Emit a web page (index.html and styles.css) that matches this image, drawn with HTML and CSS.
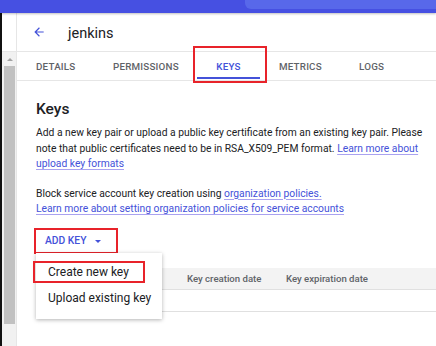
FILE: index.html
```html
<!DOCTYPE html>
<html lang="en">
<head>
    <meta charset="UTF-8">
    <meta name="viewport" content="width=device-width, initial-scale=1.0">
    <title>jenkins - Keys</title>
    <link rel="stylesheet" href="styles.css">
</head>
<body>
    <div class="topbar">
        <div class="search"></div>
    </div>
    <div class="frame">
        <div class="rail">
            <div class="rail-top"></div>
            <div class="scrollbar">
                <div class="sb-arrow"></div>
                <div class="sb-thumb"></div>
            </div>
        </div>
        <div class="page">
            <div class="header">
                <svg class="back" width="14" height="14" viewBox="0 0 24 24">
                    <path d="M20 11H7.83l5.59-5.59L12 4l-8 8 8 8 1.41-1.41L7.83 13H20v-2z" fill="currentColor"/>
                </svg>
                <span class="title">jenkins</span>
            </div>
            <div class="tabs">
                <div class="tab">DETAILS</div>
                <div class="tab">PERMISSIONS</div>
                <div class="tab active marked">KEYS</div>
                <div class="tab">METRICS</div>
                <div class="tab">LOGS</div>
            </div>
            <div class="content">
                <h2>Keys</h2>
                <p class="desc">Add a new key pair or upload a public key certificate from an existing key pair. Please note that public certificates need to be in RSA_X509_PEM format. <a href="#">Learn more about upload key formats</a></p>
                <p class="desc policy">Block service account key creation using <a href="#">organization policies.</a><br><a href="#">Learn more about setting organization policies for service accounts</a></p>
                <div class="actions">
                    <button class="add-key marked">ADD KEY <span class="caret"></span></button>
                    <div class="menu">
                        <div class="menu-item marked">Create new key</div>
                        <div class="menu-item">Upload existing key</div>
                    </div>
                </div>
                <div class="table">
                    <div class="row head">
                        <div class="cell c1"></div>
                        <div class="cell c4">Key creation date</div>
                        <div class="cell c5">Key expiration date</div>
                    </div>
                    <div class="row empty"></div>
                </div>
            </div>
        </div>
    </div>
</body>
</html>
```

FILE: styles.css
```css
* {
    box-sizing: border-box;
}
body {
    margin: 0;
    width: 436px;
    height: 346px;
    overflow: hidden;
    font-family: Roboto, "Liberation Sans", sans-serif;
    color: #202124;
    background: #fff;
}
.topbar {
    height: 13px;
    background: #4650e2;
    box-shadow: 0 1px 2px rgba(0, 0, 0, 0.25);
    position: relative;
    z-index: 2;
    display: flex;
}
.search {
    margin-left: 245px;
    flex: 1;
    height: 9px;
    background: #5868ea;
    border-bottom-left-radius: 6px;
}
.frame {
    display: flex;
    height: 333px;
}
.rail {
    width: 17px;
    border-left: 2px solid #111;
    border-right: 1px solid #e6e6e6;
    display: flex;
    flex-direction: column;
}
.rail-top {
    height: 39px;
    border-bottom: 1px solid #e6e6e6;
}
.scrollbar {
    flex: 1;
    background: #f1f1f1;
    padding: 4px 1px 0 2px;
}
.sb-arrow {
    width: 0;
    height: 0;
    margin: 2px auto 5px;
    border-left: 3px solid transparent;
    border-right: 3px solid transparent;
    border-bottom: 3px solid #a3a3a3;
}
.sb-thumb {
    height: 258px;
    background: #c1c1c1;
}
.page {
    flex: 1;
}
.header {
    height: 39px;
    display: flex;
    align-items: center;
    padding-left: 15px;
    border-bottom: 1px solid #e6e6e6;
}
.back {
    color: #4452d9;
}
.title {
    margin-left: 22px;
    font-size: 14.5px;
    padding-top: 2px;
}
.tabs {
    height: 29px;
    display: flex;
    align-items: stretch;
    border-bottom: 1px solid #e6e6e6;
    padding-left: 19px;
}
.tab {
    position: relative;
    display: flex;
    align-items: center;
    justify-content: flex-start;
    font-size: 9.8px;
    font-weight: 500;
    color: #5f6368;
    letter-spacing: 0.2px;
}
.tab:nth-child(1) { width: 77px; }
.tab:nth-child(2) { width: 84px; }
.tab:nth-child(3) { width: 63px; justify-content: center; }
.tab:nth-child(4) { margin-left: 19px; width: 80px; }
.tab.active {
    color: #4452d9;
}
.tab.active::after {
    content: "";
    position: absolute;
    left: 0;
    right: 0;
    bottom: 1px;
    height: 2px;
    background: #4452d9;
}
.marked {
    outline: 2px solid #e8232a;
}
.tab.marked {
    outline: none;
}
.tab.marked::before {
    content: "";
    position: absolute;
    left: -4px;
    right: -7px;
    top: -6px;
    bottom: -3px;
    border: 2px solid #e8232a;
}
.content {
    padding: 0 0 0 19px;
}
h2 {
    margin: 18px 0 6px;
    font-size: 15.5px;
    font-weight: 500;
    line-height: 20px;
}
.desc {
    margin: 0 0 14px;
    font-size: 10.3px;
    line-height: 15.5px;
}
.desc.policy {
    margin-bottom: 11px;
}
a {
    color: #4452d9;
    text-decoration: underline;
    text-decoration-color: #a9a2f0;
    text-underline-offset: 2px;
}
.actions {
    position: relative;
}
.add-key {
    margin-left: -2px;
    height: 26px;
    width: 84px;
    padding: 0 0 0 11px;
    text-align: left;
    border: none;
    background: #fff;
    font-family: inherit;
    font-size: 10.3px;
    font-weight: 500;
    color: #4452d9;
    outline-offset: -2px;
}
.caret {
    display: inline-block;
    margin-left: 6px;
    vertical-align: middle;
    border-left: 3px solid transparent;
    border-right: 3px solid transparent;
    border-top: 3px solid #4452d9;
}
.menu {
    position: absolute;
    left: 0;
    top: 25px;
    width: 126px;
    background: #fff;
    box-shadow: 0 1px 4px rgba(0, 0, 0, 0.3);
    padding: 8px 0 6px;
    z-index: 3;
}
.menu-item {
    height: 22px;
    display: flex;
    align-items: center;
    padding-left: 12px;
    font-size: 12px;
    margin-bottom: 4px;
}
.menu-item.marked {
    margin-left: -3px;
    width: 112px;
    padding-left: 15px;
    outline-offset: -2px;
}
.table {
    margin-top: 14px;
}
.row {
    display: flex;
    height: 22px;
    border-bottom: 1px solid #e0e0e0;
}
.row.head {
    background: #f3f3f3;
}
.cell {
    display: flex;
    align-items: center;
    font-size: 9.6px;
    font-weight: 500;
    color: #5f6368;
}
.c1 { width: 151px; }
.c4 { width: 99px; }
.c5 { flex: 1; }
```
